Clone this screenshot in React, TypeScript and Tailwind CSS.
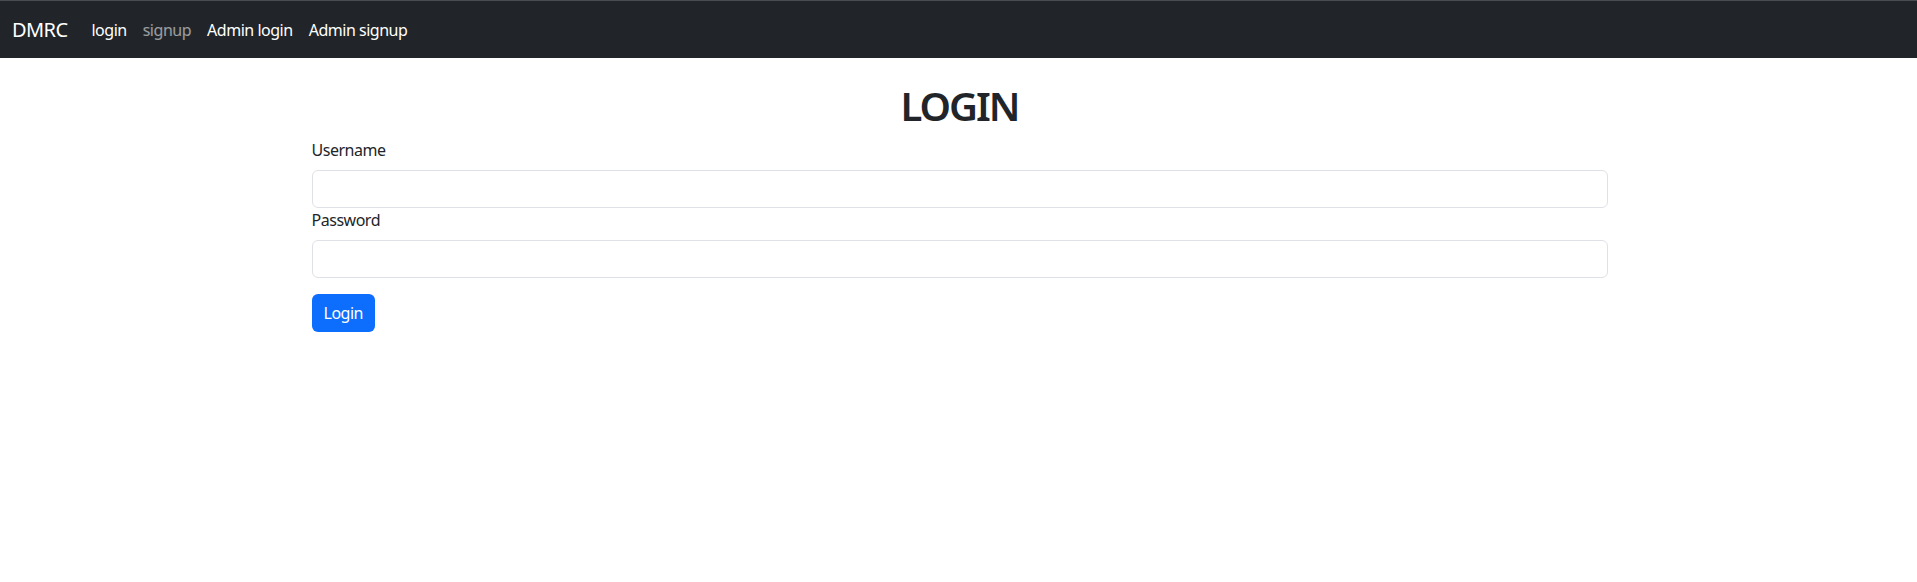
const navLinks = [
  { label: "login", active: true },
  { label: "signup", active: false },
  { label: "Admin login", active: true },
  { label: "Admin signup", active: true },
];

function Navbar() {
  return (
    <nav className="flex h-[58px] items-center border-t border-[#4a4d50] bg-[#212529] px-3">
      <a href="#" className="mr-4 py-[5px] text-[20px] tracking-[-0.03em] text-white">
        DMRC
      </a>
      <ul className="flex items-center">
        {navLinks.map((link) => (
          <li key={link.label}>
            <a
              href="#"
              className={
                link.active
                  ? "block px-2 py-2 text-[16px] text-white"
                  : "block px-2 py-2 text-[16px] text-white/55"
              }
            >
              {link.label}
            </a>
          </li>
        ))}
      </ul>
    </nav>
  );
}

function Field({ label, type }: { label: string; type: string }) {
  return (
    <div>
      <label className="mb-2 block text-[16px] leading-6 text-[#212529]">
        {label}
      </label>
      <input
        type={type}
        className="block h-[38px] w-full rounded-[6px] border border-[#dee2e6] bg-white px-3 text-[16px] outline-none"
      />
    </div>
  );
}

export default function App() {
  return (
    <div className="min-h-[582px] bg-white font-['Noto_Sans','Open_Sans',sans-serif] tracking-[-0.03em] text-[#212529]">
      <Navbar />
      <div className="mx-auto w-[1320px] translate-x-[1px] px-3">
        <h1 className="mt-6 mb-2 text-center text-[40px] leading-[48px] font-semibold tracking-[-0.05em]">
          LOGIN
        </h1>
        <form onSubmit={(e) => e.preventDefault()}>
          <Field label="Username" type="text" />
          <Field label="Password" type="password" />
          <button
            type="submit"
            className="mt-4 h-[38px] rounded-[6px] bg-[#0d6efd] px-3 text-[16px] text-white"
          >
            Login
          </button>
        </form>
      </div>
    </div>
  );
}
